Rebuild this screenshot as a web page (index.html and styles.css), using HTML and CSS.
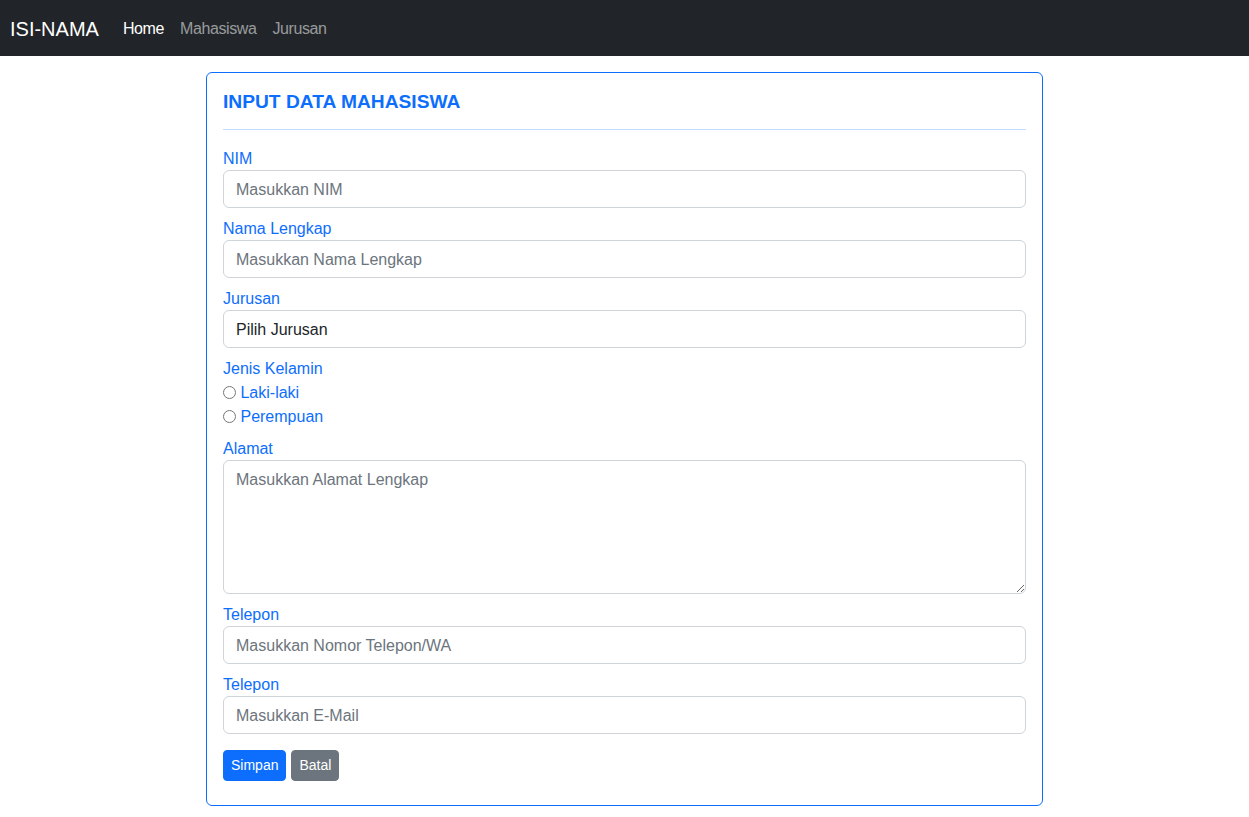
FILE: index.html
```html
<!DOCTYPE html>
<html lang="id">
<head>
<meta charset="utf-8">
<title>Input Data Mahasiswa</title>
<link rel="stylesheet" href="styles.css">
</head>
<body>
<nav class="navbar">
  <a class="brand" href="#">ISI-NAMA</a>
  <ul class="nav">
    <li><a class="nav-link active" href="#">Home</a></li>
    <li><a class="nav-link" href="#">Mahasiswa</a></li>
    <li><a class="nav-link" href="#">Jurusan</a></li>
  </ul>
</nav>
<main class="page">
  <form class="card">
    <h1 class="card-title">INPUT DATA MAHASISWA</h1>
    <hr class="divider">
    <div class="group">
      <label class="label" for="nim">NIM</label>
      <input class="control" id="nim" type="text" placeholder="Masukkan NIM">
    </div>
    <div class="group">
      <label class="label" for="nama">Nama Lengkap</label>
      <input class="control" id="nama" type="text" placeholder="Masukkan Nama Lengkap">
    </div>
    <div class="group">
      <label class="label" for="jurusan">Jurusan</label>
      <select class="control select" id="jurusan">
        <option>Pilih Jurusan</option>
      </select>
    </div>
    <div class="group">
      <span class="label">Jenis Kelamin</span>
      <div class="radio-row"><input class="radio" type="radio" name="jk" id="jk1"> <label class="radio-label" for="jk1">Laki-laki</label></div>
      <div class="radio-row"><input class="radio" type="radio" name="jk" id="jk2"> <label class="radio-label" for="jk2">Perempuan</label></div>
    </div>
    <div class="group">
      <label class="label" for="alamat">Alamat</label>
      <textarea class="control textarea" id="alamat" placeholder="Masukkan Alamat Lengkap"></textarea>
    </div>
    <div class="group">
      <label class="label" for="telp">Telepon</label>
      <input class="control" id="telp" type="text" placeholder="Masukkan Nomor Telepon/WA">
    </div>
    <div class="group">
      <label class="label" for="email">Telepon</label>
      <input class="control" id="email" type="text" placeholder="Masukkan E-Mail">
    </div>
    <div class="actions">
      <button class="btn btn-primary" type="submit">Simpan</button>
      <button class="btn btn-secondary" type="reset">Batal</button>
    </div>
  </form>
</main>
</body>
</html>
```

FILE: styles.css
```css
* { box-sizing: border-box; }

body {
  margin: 0;
  font-family: "Liberation Sans", Arial, sans-serif;
  font-size: 16px;
  line-height: 1.5;
  color: #212529;
  background: #fff;
}

.navbar {
  display: flex;
  align-items: center;
  height: 56px;
  padding: 8px 12px 8px 10px;
  background: #212529;
}

.brand {
  font-size: 20px;
  line-height: 30px;
  padding: 6px 0 4px;
  margin-right: 16px;
  color: #fff;
  text-decoration: none;
}

.nav {
  display: flex;
  list-style: none;
  margin: 0;
  padding: 0;
}

.nav-link {
  display: block;
  padding: 9px 8px 7px;
  letter-spacing: -0.4px;
  color: rgba(255, 255, 255, 0.55);
  text-decoration: none;
}

.nav-link.active { color: #fff; }

.page {
  display: flex;
  justify-content: center;
  padding-top: 16px;
}

.card {
  width: 837px;
  border: 1px solid #0d6efd;
  border-radius: 6px;
  padding: 16px;
  color: #0d6efd;
}

.card-title {
  margin: 0;
  padding-top: 1px;
  height: 24px;
  font-size: 19.2px;
  line-height: 24px;
  font-weight: 700;
  color: #0d6efd;
}

.divider {
  margin: 16px 0;
  border: 0;
  border-top: 1px solid #0d6efd;
  opacity: 0.25;
}

.group { margin-bottom: 8px; }

.label {
  display: block;
  color: #0d6efd;
  height: 24px;
  padding-top: 1px;
  line-height: 24px;
}

.control {
  display: block;
  width: 100%;
  height: 38px;
  padding: 7px 12px 5px;
  font-family: inherit;
  font-size: 16px;
  line-height: 24px;
  color: #212529;
  background: #fff;
  border: 1px solid #ced4da;
  border-radius: 6px;
  outline: none;
}

.control::placeholder { color: #6c757d; }

.select {
  appearance: none;
  -webkit-appearance: none;
}

.textarea {
  height: 134px;
  resize: vertical;
}

.radio-row {
  height: 24px;
  padding-top: 1px;
  line-height: 24px;
  color: #0d6efd;
}

.radio {
  margin: 0;
  width: 13px;
  height: 13px;
  vertical-align: -1px;
}

.radio-label { color: #0d6efd; }

.actions {
  margin-top: 16px;
  margin-bottom: 8px;
  display: flex;
  gap: 5px;
}

.btn {
  height: 31px;
  padding: 4px 7px;
  font-family: inherit;
  font-size: 14px;
  line-height: 21px;
  color: #fff;
  border: 1px solid transparent;
  border-radius: 4px;
}

.btn-primary { background: #0d6efd; border-color: #0d6efd; }
.btn-secondary { background: #6c757d; border-color: #6c757d; }
```
